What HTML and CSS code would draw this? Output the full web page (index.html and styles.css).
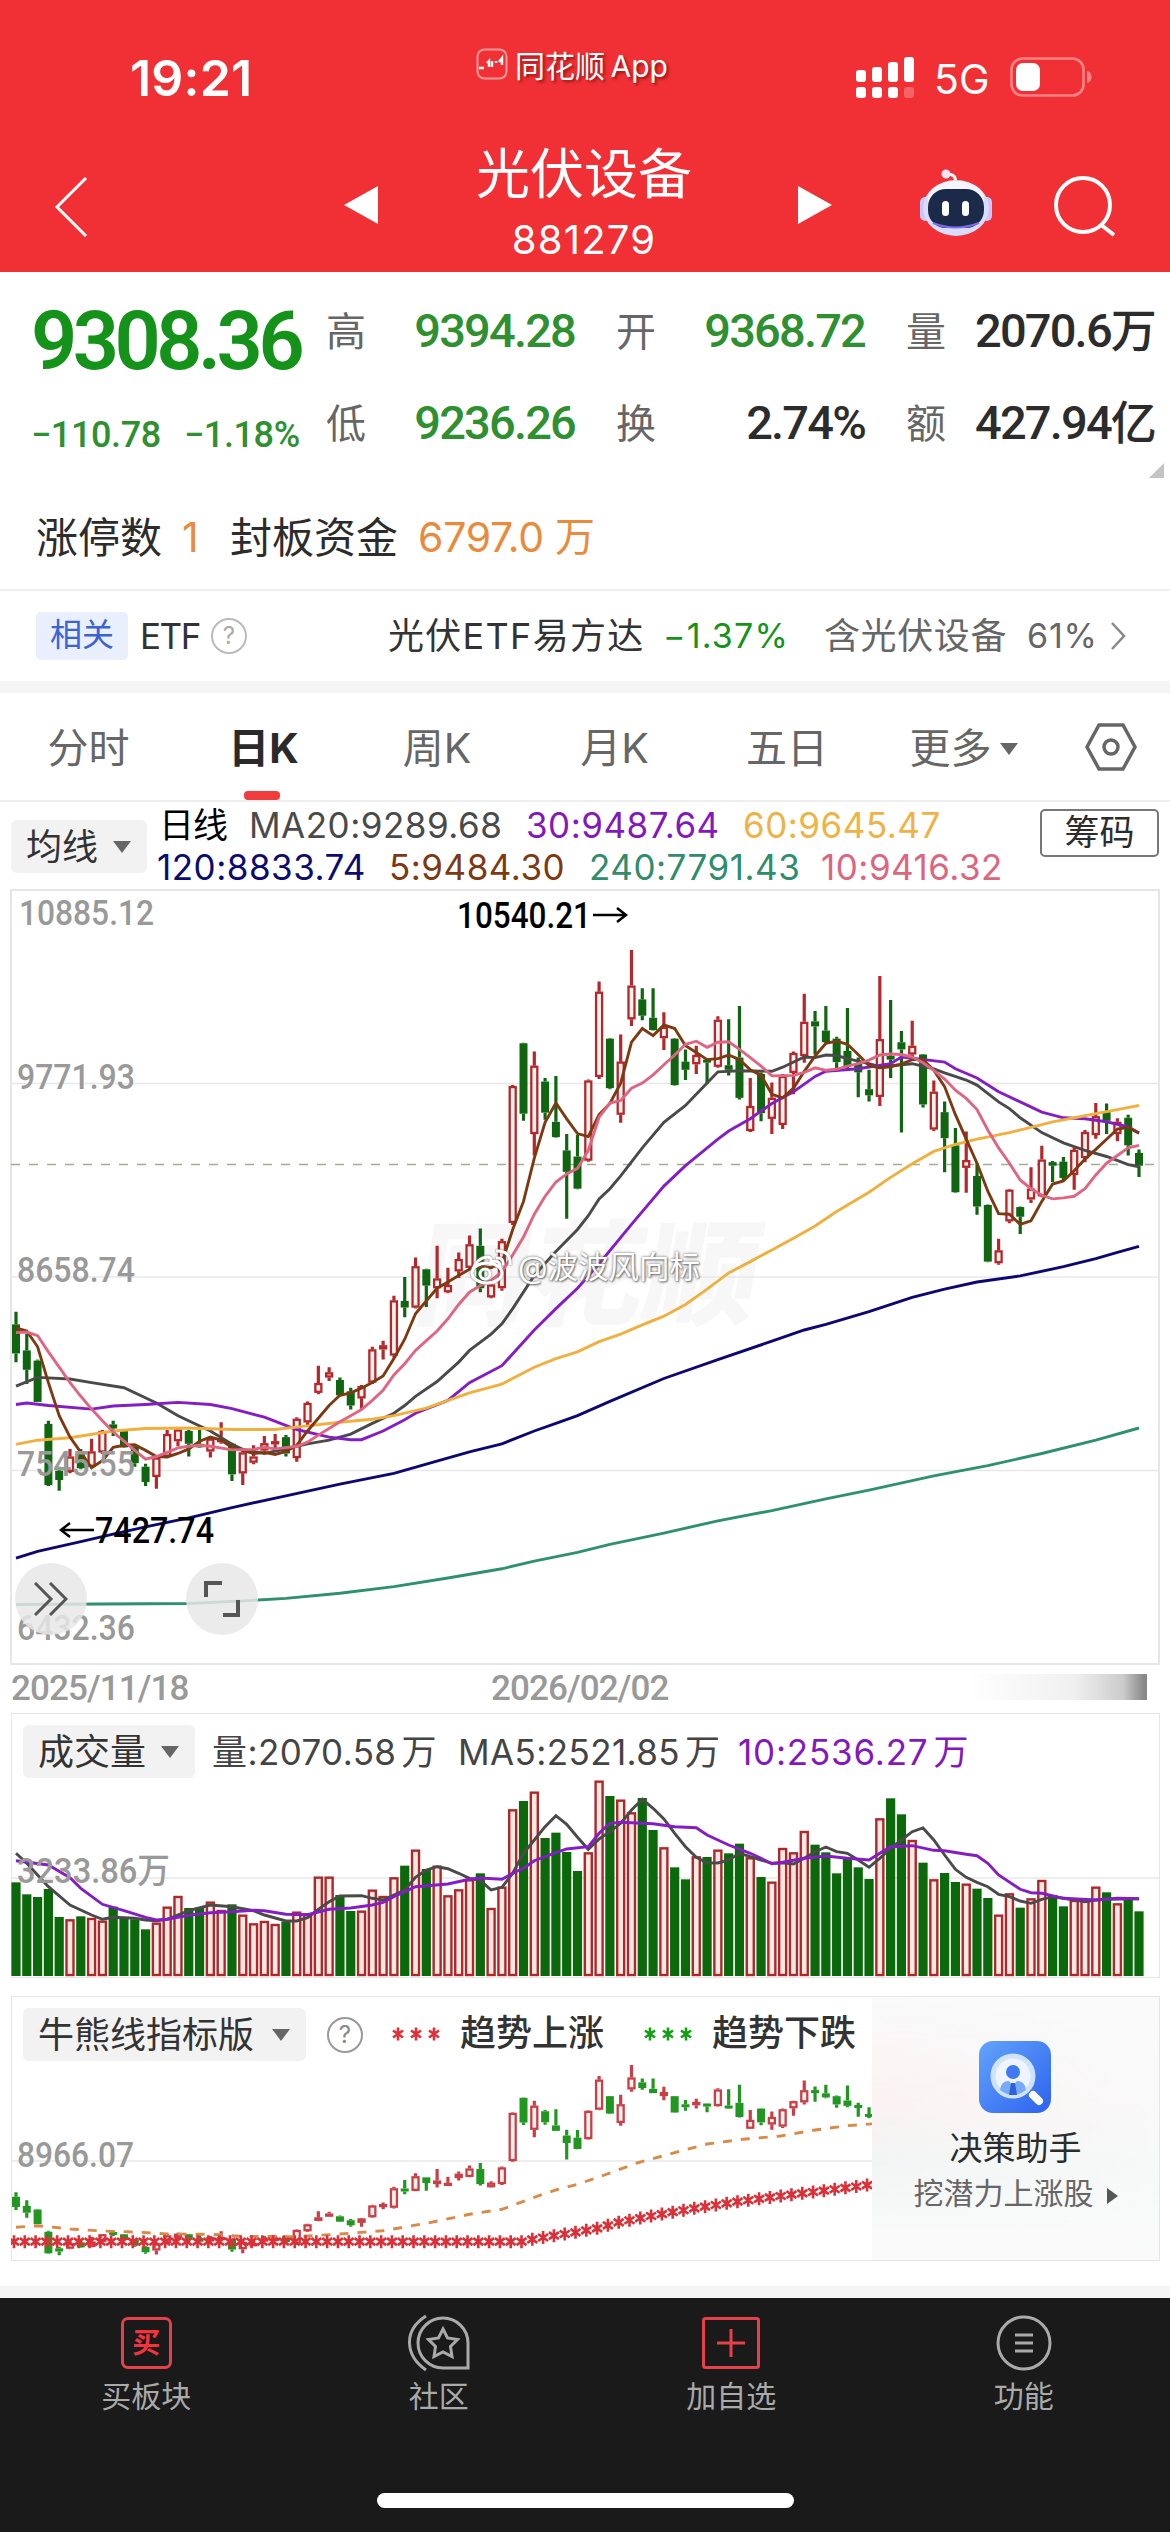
FILE: index.html
```html
<!DOCTYPE html>
<html lang="zh-CN">
<head>
  <meta charset="UTF-8">
  <meta name="viewport" content="width=device-width, initial-scale=1.0">
  <title>光伏设备 881279</title>
  <link rel="stylesheet" href="styles.css">
</head>
<body>
  <header>
    <div class="status">
      <span class="clock">19:21</span>
      <div class="brand">
        <svg width="32" height="32" viewBox="0 0 32 32" fill="none" stroke="#fff">
          <rect x="1.5" y="1.5" width="29" height="29" rx="7" stroke="#ff9a9a" stroke-width="2"/>
          <path d="M3 20h5M11 15l2-2v6M16 19v-6M20 15v-2M23 14l3-4v7" stroke-width="2.4"/>
        </svg>
        <span>同花顺 App</span>
      </div>
      <div class="phone">
        <svg width="58" height="42" viewBox="0 0 58 42" fill="#fff">
          <rect x="0" y="13" width="10" height="12" rx="3"/>
          <rect x="16" y="10" width="10" height="15" rx="3"/>
          <rect x="32" y="5" width="10" height="20" rx="3"/>
          <rect x="48" y="0" width="10" height="25" rx="3"/>
          <rect x="0" y="30" width="10" height="11" rx="3"/>
          <rect x="16" y="30" width="10" height="11" rx="3"/>
          <rect x="32" y="30" width="10" height="11" rx="3"/>
          <rect x="48" y="30" width="10" height="11" rx="3" opacity=".25"/>
        </svg>
        <span class="net">5G</span>
        <svg width="82" height="40" viewBox="0 0 82 40" fill="none">
          <rect x="1.5" y="1.5" width="72" height="37" rx="11" stroke="#f98486" stroke-width="2.6"/>
          <rect x="6" y="6" width="24" height="28" rx="7" fill="#fff"/>
          <path d="M77 14q4.500 1 4.500 6t-4.500 6z" fill="#f98486"/>
        </svg>
      </div>
    </div>
    <div class="titlebar">
      <svg class="back" width="36" height="62" viewBox="0 0 36 62"><path d="M33 2L4 31l29 29" fill="none" stroke="#fff" stroke-width="3"/></svg>
      <svg class="prev" width="34" height="38" viewBox="0 0 34 38"><path d="M34 0v38L0 19z" fill="#fff"/></svg>
      <div class="title">
        <h1>光伏设备</h1>
        <p>881279</p>
      </div>
      <svg class="next" width="34" height="38" viewBox="0 0 34 38"><path d="M0 0v38l34-19z" fill="#fff"/></svg>
      <svg class="robot" width="74" height="68" viewBox="0 0 74 68">
        <path d="M36 13q2-7-7-8" fill="none" stroke="#fff" stroke-width="3"/>
        <circle cx="27" cy="5" r="4.500" fill="#fbe4f4"/>
        <rect x="1" y="28" width="10" height="24" rx="5" fill="#c9c6fa"/>
        <rect x="63" y="28" width="10" height="24" rx="5" fill="#c9c6fa"/>
        <ellipse cx="37" cy="39" rx="33" ry="28" fill="#d9dcfb"/>
        <ellipse cx="37" cy="30" rx="28" ry="18" fill="#f3f5ff"/>
        <rect x="9" y="20" width="56" height="39" rx="18" fill="#1b2a48"/>
        <path d="M14 54q22 9 46 0" fill="none" stroke="#7d6cf0" stroke-width="2"/>
        <rect x="23" y="32" width="7" height="15" rx="3.500" fill="#fff"/>
        <rect x="43" y="32" width="7" height="15" rx="3.500" fill="#fff"/>
      </svg>
      <svg class="search" width="62" height="62" viewBox="0 0 62 62" fill="none" stroke="#fff" stroke-width="4"><circle cx="29" cy="30" r="27"/><path d="M46 49l14 11"/></svg>
    </div>
  </header>

  <section class="quote">
    <div class="price">
      <strong>9308.36</strong>
      <p><span class="diff">−110.78</span><span class="rate">−1.18%</span></p>
    </div>
    <dl class="stats">
      <dt>高</dt><dd class="green">9394.28</dd>
      <dt>开</dt><dd class="green">9368.72</dd>
      <dt>量</dt><dd>2070.6<i>万</i></dd>
      <dt>低</dt><dd class="green">9236.26</dd>
      <dt>换</dt><dd>2.74%</dd>
      <dt>额</dt><dd>427.94<i>亿</i></dd>
    </dl>
    <span class="corner"></span>
  </section>
  <p class="limit"><span>涨停数</span><b class="one">1</b><span>封板资金</span><b>6797.0</b><em>万</em></p>

  <section class="etf">
    <span class="tag">相关</span>
    <span class="etf-name">ETF</span>
    <span class="help">?</span>
    <span class="fund">光伏ETF易方达</span>
    <span class="fund-rate">−1.37%</span>
    <span class="hold">含光伏设备</span>
    <span class="hold-rate">61%</span>
    <svg width="16" height="30" viewBox="0 0 16 30"><path d="M2 2l12 13L2 28" fill="none" stroke="#888" stroke-width="2.500"/></svg>
  </section>
  <div class="band"></div>

  <nav class="tabs">
    <a>分时</a>
    <a class="active">日K</a>
    <a>周K</a>
    <a>月K</a>
    <a>五日</a>
    <a>更多<i class="caret"></i></a>
    <svg width="52" height="48" viewBox="0 0 52 48" fill="none" stroke="#666" stroke-width="3.500"><path d="M14 2h24l12 22-12 22H14L2 24z"/><circle cx="26" cy="24" r="7"/></svg>
  </nav>

  <section class="ma">
    <span class="pill">均线<i class="caret"></i></span>
    <div class="ma-rows">
      <p><span class="ma-name">日线</span><span class="ma20">MA20:9289.68</span><span class="ma30">30:9487.64</span><span class="ma60">60:9645.47</span></p>
      <p><span class="ma120">120:8833.74</span><span class="ma5">5:9484.30</span><span class="ma240">240:7791.43</span><span class="ma10">10:9416.32</span></p>
    </div>
    <span class="chips">筹码</span>
  </section>

  <section class="kline">
    <svg id="kline" width="1170" height="778"></svg>
    <span class="logo-mark">同花顺</span>
    <div class="user-mark">
      <svg width="42" height="38" viewBox="0 0 42 38" fill="none" stroke="#fff" stroke-width="3">
        <ellipse cx="17" cy="25" rx="15" ry="10"/>
        <path d="M3 21Q7 10 17 9q5 0 4 5 9-3 9 5"/>
        <circle cx="15" cy="26" r="5"/>
        <path d="M26 10q8-1 7 7M26 3q15-1 14 14"/>
      </svg>
      <span>@波波风向标</span>
    </div>
    <span class="round expand"><svg width="34" height="34" viewBox="0 0 34 34" fill="none" stroke="#555" stroke-width="3"><path d="M1 1l16 16L1 33M16 1l16 16-16 16"/></svg></span>
    <span class="round full"><svg width="36" height="36" viewBox="0 0 36 36" fill="none" stroke="#555" stroke-width="4"><path d="M2 16V2h16M34 19v15H19"/></svg></span>
  </section>
  <div class="dates"><span>2025/11/18</span><span>2026/02/02</span><i></i></div>

  <section class="panel volume">
    <div class="panel-head">
      <span class="pill">成交量<i class="caret"></i></span>
      <span class="v-now">量:2070.58<i>万</i></span>
      <span class="v-ma5">MA5:2521.85<i>万</i></span>
      <span class="v-ma10">10:2536.27<i>万</i></span>
    </div>
    <svg id="volume" width="1148" height="199" viewBox="11 0 1148 199"></svg>
  </section>

  <section class="panel bull">
    <div class="bull-main">
      <div class="panel-head">
        <span class="pill">牛熊线指标版<i class="caret"></i></span>
        <span class="help">?</span>
        <svg class="stars" width="52" height="18" stroke="#e03038"><use href="#star" x="8" y="9"/><use href="#star" x="26" y="9"/><use href="#star" x="44" y="9"/></svg>
        <span class="trend">趋势上涨</span>
        <svg class="stars second" width="52" height="18" stroke="#14a014"><use href="#star" x="8" y="9"/><use href="#star" x="26" y="9"/><use href="#star" x="44" y="9"/></svg>
        <span class="trend">趋势下跌</span>
      </div>
      <svg id="bull" width="861" height="199" viewBox="11 0 861 199">
        <defs><path id="star" d="M0 -6.500V6.500M-5 -3.500L5 3.500M5 -3.500L-5 3.500" stroke-width="2.600"/></defs>
      </svg>
    </div>
    <aside>
      <svg width="72" height="72" viewBox="0 0 72 72">
        <defs><linearGradient id="blue" x1="0" y1="0" x2="1" y2="1"><stop offset="0" stop-color="#62a4fb"/><stop offset="1" stop-color="#2d62ee"/></linearGradient></defs>
        <rect width="72" height="72" rx="14" fill="url(#blue)"/>
        <circle cx="34" cy="35" r="20" fill="#eef5ff" stroke="#cfe2ff" stroke-width="5"/>
        <circle cx="34" cy="31" r="7" fill="#3f7af2"/>
        <path d="M21 49q1-9 9-9l4 5 4-5q8 0 9 9-13 10-26 0z" fill="#7aa9f7"/>
        <path d="M32 42h4l2 12h-8z" fill="#2d62d8"/>
        <path d="M54 54l6 6" stroke="#fff" stroke-width="8" stroke-linecap="round"/>
      </svg>
      <h2>决策助手</h2>
      <p>挖潜力上涨股<i></i></p>
    </aside>
  </section>

  <div class="band bottom"></div>
  <footer>
    <div class="menu">
      <a><span class="icon buy">买</span>买板块</a>
      <a><span class="icon"><svg width="62" height="58" viewBox="0 0 62 58" fill="none" stroke="#aaa" stroke-width="3"><path d="M18 2Q1 13 1.500 29T18 56"/><path d="M60 54H35a25 25 0 1 1 25-25z"/><path d="M35 15l4.500 9 10 1.500-7 7 1.500 10-9-4.500-9 4.500 1.500-10-7-7 10-1.500z"/></svg></span>社区</a>
      <a><span class="icon"><svg width="58" height="52" viewBox="0 0 58 52" fill="none" stroke="#e5414b" stroke-width="3"><rect x="1.500" y="1.500" width="55" height="49" rx="2"/><path d="M29 12v28M15 26h28"/></svg></span>加自选</a>
      <a><span class="icon"><svg width="56" height="56" viewBox="0 0 56 56" fill="none" stroke="#aaa" stroke-width="3"><circle cx="28" cy="28" r="26"/><path d="M19 20h18M19 28h18M19 36h18"/></svg></span>功能</a>
    </div>
    <div class="home"></div>
  </footer>
  <script src="charts.js"></script>
</body>
</html>
```
FILE: styles.css
```css
* {
  box-sizing: border-box;
}

body {
  margin: 0;
  width: 1170px;
  height: 2532px;
  display: flex;
  flex-direction: column;
  background: #fff;
  color: #2c2c2c;
  font-family: Inter, "Noto Sans CJK SC", sans-serif;
  line-height: 1;
  white-space: nowrap;
  overflow: hidden;
}

p, h1, h2, dl, dd {
  margin: 0;
  font-weight: 400;
}

i, em {
  font-style: normal;
}

svg {
  display: block;
  flex: none;
}

/* header */
header {
  height: 272px;
  flex: none;
  background: #f03035;
  color: #fff;
}

.status {
  height: 140px;
  display: grid;
  grid-template-columns: 476px 380px 1fr;
  padding-top: 48px;
}

.clock {
  padding: 5px 0 0 130px;
  font-size: 50px;
  font-weight: 600;
  letter-spacing: .2px;
}

.brand {
  display: flex;
  gap: 7px;
  font-size: 30px;
  text-shadow: 2px 2px 3px rgba(90, 0, 0, .6);
  word-spacing: -3px;
}

.brand span {
  padding-top: 3px;
}

.phone {
  display: flex;
  align-items: flex-start;
  padding-top: 9px;
}

.net {
  margin: 2px 20px 0 20px;
  font-size: 41px;
  letter-spacing: 0;
}

.titlebar {
  display: flex;
  height: 132px;
}

.back { margin: 36px 0 0 53px; }
.prev { margin: 46px 0 0 255px; }
.next { margin: 46px 0 0 106px; }
.robot { margin: 29px 0 0 87px; }
.search { margin: 35px 0 0 61px; }

.title {
  width: 216px;
  margin-left: 98px;
  text-align: center;
}

.title h1 {
  margin-top: 8px;
  font-size: 54px;
}

.title p {
  margin-top: 18px;
  font-size: 40px;
  letter-spacing: 1.200px;
}

/* quote */
.quote {
  position: relative;
  display: flex;
  height: 214px;
}

.price {
  width: 326px;
  padding: 29px 0 0 31px;
  color: #15921a;
  font-family: Roboto, sans-serif;
}

.price strong {
  display: block;
  font-size: 81px;
  font-weight: 600;
  letter-spacing: -4.500px;
}

.price p {
  display: flex;
  margin-top: 35px;
  font-size: 36px;
  font-weight: 500;
  letter-spacing: -.4px;
  color: #2e9030;
}

.diff {
  width: 153px;
}

.stats {
  display: grid;
  grid-template-columns: 40px 209px 81px 209px 81px 209px;
  grid-template-rows: 92px 92px;
  padding-top: 35px;
}

.stats dt {
  padding-top: 5px;
  font-size: 40px;
  text-align: right;
  color: #666;
}

.stats dd {
  font-family: Roboto, "Noto Sans CJK SC", sans-serif;
  font-size: 47px;
  font-weight: 500;
  letter-spacing: -1.800px;
  text-align: right;
}

.stats .green {
  color: #2e9030;
}

.stats dd i {
  font-size: 46px;
}

.corner {
  position: absolute;
  left: 1149px;
  top: 191px;
  border-left: 15px solid transparent;
  border-bottom: 15px solid #c4c4c4;
}

.limit {
  display: flex;
  height: 105px;
  padding: 31px 0 0 36px;
  font-size: 42px;
  border-bottom: 2px solid #eee;
}

.limit b {
  width: 137px;
  margin-left: 20px;
  font-weight: 400;
  font-size: 41px;
  letter-spacing: -.3px;
  color: #e88b3c;
}

.limit .one {
  width: 48px;
}

.limit em {
  color: #e88b3c;
  font-size: 40px;
}

/* etf row */
.etf {
  display: flex;
  align-items: center;
  height: 90px;
  padding-left: 36px;
  font-size: 36px;
  color: #333;
}

.tag {
  width: 92px;
  padding: 7px 0 9px;
  font-size: 32px;
  text-align: center;
  color: #3c63d2;
  background: #e9effd;
  border-radius: 5px;
}

.etf-name {
  width: 70px;
  padding-left: 12px;
  letter-spacing: -1.500px;
  font-size: 35px;
}

.help {
  width: 36px;
  height: 36px;
  margin-left: 13px;
  border: 2.500px solid #bbb;
  border-radius: 50%;
  font-size: 24px;
  line-height: 31px;
  text-align: center;
  color: #aaa;
}

.fund {
  width: 275px;
  margin-left: 141px;
  letter-spacing: 1.300px;
}

.fund-rate {
  width: 161px;
  color: #15921a;
  font-size: 34px;
  letter-spacing: 1.200px;
}

.hold {
  width: 203px;
  letter-spacing: .6px;
  color: #666;
}

.hold-rate {
  width: 83px;
  color: #666;
  font-size: 34px;
  letter-spacing: .8px;
}

.band {
  height: 12px;
  flex: none;
  background: #f5f5f5;
}

/* period tabs */
.tabs {
  height: 109px;
  display: flex;
  flex: none;
  border-bottom: 2px solid #eee;
  font-size: 41px;
  color: #666;
}

.tabs a {
  width: 177px;
  padding-top: 35px;
  text-align: center;
}

.tabs a:nth-child(3) { width: 166px; }
.tabs a:nth-child(4) { width: 189px; }
.tabs a:nth-child(5) { width: 156px; }
.tabs a:nth-child(6) { width: 197px; }
.tabs svg { margin: 30px 0 0 23px; }

.tabs .active {
  position: relative;
  left: -2px;
  font-weight: 700;
  color: #2a2a2a;
}

.tabs .active::after {
  content: "";
  position: absolute;
  left: 69px;
  bottom: 0;
  width: 36px;
  height: 9px;
  border-radius: 4px;
  background: #f03c3c;
}

.caret {
  display: inline-block;
  border: 9px solid transparent;
  border-top: 12px solid #666;
  border-bottom: 0;
}

.tabs .caret {
  margin-left: 8px;
  vertical-align: 8px;
}

/* moving averages */
.ma {
  display: flex;
  height: 86px;
  flex: none;
}

.pill {
  display: flex;
  align-items: center;
  justify-content: space-between;
  height: 53px;
  padding: 0 16px 0 15px;
  background: #f2f2f2;
  border-radius: 6px;
  font-size: 36px;
  color: #333;
}

.ma .pill {
  width: 136px;
  margin: 18px 0 0 11px;
}

.ma-rows {
  width: 893px;
  padding: 6px 0 0 10px;
  font-size: 35px;
  letter-spacing: .5px;
}

.ma-rows p {
  display: flex;
  height: 42px;
}

.ma-name {
  color: #000;
  padding-left: 2px;
  width: 92px;
  letter-spacing: -1px;
}

.ma20 { color: #4a4a4a; width: 277px; }
.ma30 { color: #8319bd; width: 217px; }
.ma60 { color: #efb244; }
.ma120 { color: #0c0c70; width: 232px; }
.ma5 { color: #7d3a12; width: 200px; }
.ma240 { color: #2f8d6c; width: 232px; }
.ma10 { color: #dc6680; }

.chips {
  width: 119px;
  height: 48px;
  margin-top: 7px;
  padding-top: 4px;
  border: 2px solid #777;
  border-radius: 5px;
  font-size: 35px;
  text-align: center;
}

/* candles */
.kline {
  position: relative;
  height: 778px;
  flex: none;
}

.kline > svg {
  position: relative;
  z-index: 1;
}

.logo-mark {
  position: absolute;
  left: 418px;
  top: 330px;
  font-size: 114px;
  font-weight: 900;
  color: #f7f7f7;
  transform: skewX(-10deg);
}

.user-mark {
  position: absolute;
  z-index: 2;
  left: 470px;
  top: 360px;
  display: flex;
  gap: 6px;
  font-size: 30.500px;
  line-height: 38px;
  color: #fff;
  text-shadow: 0 0 3px #666, 1px 1px 2px #777;
}

.user-mark svg {
  filter: drop-shadow(0 0 1px #666);
}

.round {
  position: absolute;
  z-index: 2;
  top: 675px;
  width: 72px;
  height: 72px;
  border-radius: 50%;
  display: flex;
  align-items: center;
  justify-content: center;
  background: rgba(232, 232, 232, .85);
}

.expand { left: 15px; }
.full { left: 186px; }

.axis {
  font: 500 35px Roboto, "Noto Sans CJK SC", sans-serif;
  fill: #999;
}

.mark {
  font: 500 36px Roboto, sans-serif;
  fill: #000;
}

.dates {
  display: flex;
  height: 47px;
  padding: 5px 0 0 11px;
  font: 500 35px/1 Roboto, sans-serif;
  color: #999;
}

.dates span {
  width: 480px;
  letter-spacing: -.9px;
}

.dates i {
  width: 178px;
  height: 26px;
  margin-top: 3px;
  margin-left: -2px;
  border-right: 3px solid #888;
  background: linear-gradient(to right, #fff, #f0f0f0 60%, #ccc 88%, #888);
}

/* lower charts */
.panel {
  width: 1149px;
  height: 265px;
  margin-left: 11px;
  border: 1.500px solid #e6e6e6;
  flex: none;
}

.panel svg {
  margin-left: -1px;
}

.panel-head {
  display: flex;
  height: 64px;
  padding: 11px 0 0 11px;
}

.volume .pill { width: 172px; }

.v-now, .v-ma5, .v-ma10 {
  padding-top: 10px;
  font-size: 35px;
  letter-spacing: .4px;
  color: #444;
}

.volume .panel-head i:not(.caret) {
  margin-left: 5px;
}

.v-now { width: 246px; margin-left: 17px; }
.v-ma5 { width: 280px; }
.v-ma10 { color: #8319bd; letter-spacing: .8px; }

.bull {
  display: flex;
  margin-top: 18px;
}

.bull-main {
  width: 860px;
}

.bull .pill { width: 283px; }
.bull .help { margin: 9px 0 0 21px; color: #888; border-color: #999; }
.bull .panel-head svg { margin: 17px 0 0 27px; }
.bull .panel-head .second { margin-left: 37px; }

.trend {
  width: 145px;
  margin-left: 18px;
  padding-top: 7px;
  font-size: 36px;
  font-weight: 500;
  color: #333;
}

aside {
  flex: 1;
  display: flex;
  flex-direction: column;
  align-items: center;
  padding-top: 44px;
  background: linear-gradient(to bottom left, rgba(249, 250, 250, .9) 20%, transparent), linear-gradient(#f9f9f9, #fdeeee 38%, #f0f4f3 62%, #fafafa 90%);
}

aside h2 {
  margin-top: 19px;
  font-size: 33px;
}

aside p {
  margin-top: 13px;
  font-size: 30px;
  color: #666;
}

aside p i {
  display: inline-block;
  margin-left: 13px;
  border: 8px solid transparent;
  border-left: 11px solid #555;
  border-right: 0;
}

.bottom {
  margin-top: 25px;
}

/* bottom bar */
footer {
  flex: 1;
  background: #1a1a1a;
  color: #aaa;
}

.menu {
  display: grid;
  grid-template-columns: repeat(4, 1fr);
  height: 195px;
  padding-top: 15px;
}

.menu a {
  display: flex;
  flex-direction: column;
  align-items: center;
  font-size: 30px;
}

.icon {
  height: 60px;
  margin-bottom: 8px;
  display: flex;
  align-items: center;
}

.buy {
  width: 51px;
  height: 52px;
  margin: 4px 0 12px;
  justify-content: center;
  border: 3px solid #e5414b;
  border-radius: 7px;
  font-weight: 700;
  font-size: 28px;
  color: #f5333f;
}

.home {
  width: 417px;
  height: 15px;
  margin: 0 auto;
  border-radius: 8px;
  background: #fff;
}
```
FILE: charts.js
```js
// each candle: high, body top, body bottom, low, 1 = up / 0 = down
const candles = [
  [846,871,928,945,0],[890,922,960,988,0],[940,942,1023,1023,0],[1060,1066,1186,1188,0],[1150,1158,1176,1197,0],
  [1115,1130,1160,1163,1],[1115,1125,1153,1155,0],[1095,1120,1150,1152,1],[1078,1080,1122,1125,1],[1060,1067,1075,1090,0],
  [1078,1080,1112,1113,0],[1108,1110,1143,1150,0],[1144,1150,1180,1188,0],[1130,1132,1170,1193,1],[1078,1086,1130,1132,1],
  [1072,1077,1100,1110,1],[1078,1080,1105,1130,0],[1078,1105,1112,1113,0],[1090,1095,1120,1132,1],[1063,1096,1100,1105,1],
  [1103,1105,1165,1178,0],[1118,1122,1163,1186,1],[1108,1130,1142,1145,1],[1090,1104,1118,1120,1],[1086,1100,1106,1115,1],
  [1088,1092,1124,1130,0],[1053,1056,1133,1140,1],[1022,1025,1063,1068,1],[952,986,1005,1008,1],[955,965,975,982,1],
  [975,980,1010,1012,0],[995,1002,1030,1038,0],[990,992,1016,1038,1],[915,920,985,988,1],[903,912,920,940,1],
  [815,824,932,936,1],[778,825,838,857,0],[740,757,838,840,1],[762,763,795,837,0],[717,781,800,820,1],
  [760,794,808,810,1],[730,743,767,780,1],[697,714,760,763,1],[683,717,800,808,0],[785,793,818,820,1],
  [703,708,800,805,1],[402,404,672,676,1],[319,320,458,472,0],[336,364,498,540,1],[388,395,456,470,0],
  [384,474,504,505,0],[498,530,572,664,0],[500,542,605,606,0],[391,393,550,552,1],[199,219,386,390,1],
  [310,311,408,410,0],[303,356,460,476,1],[137,207,273,286,1],[212,234,266,275,0],[212,270,294,295,0],
  [259,288,310,333,1],[310,311,402,403,0],[332,356,372,392,0],[325,343,361,380,1],[350,352,356,400,0],
  [267,274,366,368,1],[273,363,372,383,0],[247,348,427,430,0],[388,443,492,494,1],[378,380,457,473,0],
  [397,427,468,498,1],[380,384,480,488,1],[336,339,378,420,1],[223,278,345,358,1],[257,277,287,342,0],
  [247,295,318,322,0],[307,311,357,375,0],[251,335,365,372,0],[348,360,377,426,0],[372,410,422,434,0],
  [188,312,425,443,1],[235,345,352,388,0],[296,318,332,495,0],[276,325,342,352,1],[341,342,440,446,0],
  [393,415,489,492,1],[434,455,506,573,0],[486,520,612,613,0],[493,549,564,613,1],[555,580,640,656,0],
  [636,637,748,749,0],[703,726,751,754,1],[606,607,669,673,1],[640,641,660,694,0],[563,605,626,633,1],
  [521,548,620,622,1],[551,553,560,592,0],[543,552,584,590,0],[524,529,578,607,1],[490,494,545,553,1],
  [437,463,500,507,1],[438,455,472,498,0],[467,474,498,512,1],[460,466,520,540,0],[528,535,560,582,0]
];

const volumes = [
  727,763,771,747,831,838,829,834,842,800,833,838,868,848,800,768,804,802,785,810,793,824,850,843,852,845,815,820,
  710,710,765,813,812,749,768,712,677,629,687,677,766,748,718,700,804,740,508,483,455,594,578,636,693,637,422,468,
  479,517,474,570,622,682,718,649,651,629,640,611,652,711,725,624,637,573,614,637,700,655,682,717,535,475,523,600,
  668,718,699,726,731,746,774,824,760,803,775,720,765,799,780,780,740,757,790,775,814
];

// lines are "index:value" pairs, the gaps are joined straight
const averages = [
  ['#4a4a4a', '0:992 2:975 5:978 7:985 10:995 13:1025 15:1050 18:1080 20:1106 21:1116 23:1124 25:1115 27:1105 29:1098 31:1086 33:1065 35:1045 36:1030 37:1012 39:983 41:945 42:922 44:890 45:870 46:840 48:775 50:728 52:685 53:658 54:625 55:605 56:580 58:525 60:475 62:442 64:398 65:376 67:374 70:375 71:367 73:347 74:348 75:343 76:344 77:350 79:360 80:366 83:360 85:370 86:378 88:392 89:402 91:435 92:448 93:466 95:495 97:515 99:530 101:542 103:558 104:562'],
  ['#851dc4', '0:1028 1:1025 3:1030 7:1037 9:1031 12:1028 15:1024 18:1028 20:1036 23:1053 26:1077 29:1092 31:1097 32:1097 34:1080 36:1058 37:1045 40:1020 42:985 45:952 48:882 50:840 52:800 54:752 57:675 60:600 62:560 65:508 66:492 68:468 70:438 72:415 73:400 74:385 75:375 78:370 81:360 82:347 83:349 86:357 87:370 89:388 91:415 93:435 95:455 97:466 99:468 101:474 103:484 104:496'],
  ['#efb040', '0:1106 2:1098 5:1093 9:1080 12:1075 16:1074 20:1077 24:1077 27:1070 30:1063 33:1057 35:1050 38:1035 42:1005 45:988 48:955 50:938 52:925 54:905 56:890 58:872 60:855 62:832 64:802 66:770 68:748 70:725 72:702 74:678 76:650 79:612 81:583 83:556 85:532 87:518 89:508 92:495 94:485 96:474 98:466 100:458 102:450 104:442'],
  ['#0d0870', '0:1329 2:1316 6:1297 9:1282 12:1268 16:1250 20:1230 25:1207 30:1184 35:1163 38:1145 42:1121 45:1105 48:1080 50:1065 52:1050 55:1022 60:977 65:940 70:904 73:882 75:871 79:846 83:818 86:802 89:788 93:776 97:758 100:742 102:730 104:718'],
  ['#2f9070', '0:1420 16:1418 21:1413 25:1408 30:1398 35:1385 40:1368 45:1350 48:1335 52:1318 55:1302 60:1280 65:1256 70:1236 75:1213 79:1196 85:1168 90:1148 95:1124 100:1098 104:1074'],
  ['#7d3a12', '0:878 1:884 2:915 3:985 4:1050 5:1092 6:1122 7:1152 8:1138 9:1112 10:1108 11:1107 12:1118 13:1130 14:1131 15:1124 16:1115 17:1100 18:1092 19:1098 20:1112 21:1118 22:1124 23:1122 24:1126 25:1120 26:1108 27:1080 28:1055 29:1030 30:1010 31:1005 32:996 33:985 34:972 35:938 36:900 37:850 38:825 39:800 40:788 41:775 42:763 43:757 44:760 45:750 46:685 47:630 48:545 49:475 50:437 51:468 52:497 53:503 54:460 55:438 56:398 57:318 58:291 59:305 60:284 61:291 62:325 63:338 64:352 65:350 66:343 67:352 68:372 69:383 70:420 71:427 72:408 73:375 74:345 75:320 76:316 77:322 78:342 79:364 80:368 81:366 82:361 83:352 84:352 85:373 86:405 87:460 88:508 89:555 90:610 91:654 92:655 93:675 94:668 95:630 96:596 97:590 98:570 99:547 100:528 101:508 102:488 103:485 104:496'],
  ['#df6582', '0:887 1:886 2:893 3:925 4:955 5:985 6:1012 7:1037 8:1060 9:1082 10:1100 11:1118 12:1135 13:1130 14:1122 15:1113 16:1110 17:1108 18:1110 20:1117 22:1116 23:1112 24:1115 26:1110 27:1102 28:1088 29:1075 30:1062 31:1050 32:1038 33:1020 34:1000 35:970 36:948 37:922 38:903 39:884 40:860 41:832 42:808 43:795 44:785 45:768 46:735 47:700 48:655 49:620 50:592 51:576 52:565 53:530 54:465 55:437 56:432 57:408 58:398 59:382 60:362 61:343 62:322 63:316 64:328 65:318 66:317 67:332 68:348 69:365 70:384 72:383 73:377 74:368 75:373 76:371 77:365 78:360 79:353 80:343 81:341 82:342 83:347 84:358 85:373 86:390 87:412 88:428 89:450 90:490 91:525 92:555 93:588 94:605 95:618 96:625 97:623 98:620 99:605 100:578 101:555 102:540 103:525 104:520']
];

const volumeAverages = [
  ['#4a4a4a', '0:640 1:670 3:740 5:795 7:825 8:838 9:832 11:835 12:840 13:842 14:838 16:812 18:795 20:800 22:812 23:825 25:843 26:843 27:833 28:808 29:785 30:768 32:767 33:775 34:780 35:765 36:750 37:712 38:690 39:680 40:686 41:700 42:715 43:722 44:750 45:742 46:700 47:640 48:600 49:560 50:527 51:553 52:592 53:628 54:597 55:575 56:550 57:510 58:478 59:505 60:537 61:580 62:620 63:652 64:668 65:669 66:660 67:640 68:650 69:660 70:670 71:668 72:672 73:655 74:635 75:621 76:635 77:640 78:660 79:682 80:655 81:625 82:600 83:575 84:564 85:600 86:645 87:688 88:712 89:727 90:740 91:763 92:770 93:783 94:790 95:778 96:770 97:775 98:780 99:785 100:780 101:778 104:776'],
  ['#851dc4', '0:662 3:675 5:713 6:745 8:793 10:812 12:832 13:840 14:838 16:826 18:818 20:815 22:811 23:812 25:823 27:824 29:808 31:804 33:795 34:787 35:770 36:755 37:740 40:732 42:718 43:714 45:718 46:700 47:685 48:662 50:638 51:627 53:620 54:580 55:550 56:547 59:551 61:560 63:563 64:585 66:615 68:640 69:655 70:671 71:667 73:655 75:648 77:655 79:660 80:640 81:620 83:617 85:631 86:632 88:643 89:647 90:670 91:705 93:748 94:758 95:760 97:775 100:780 102:775 104:776']
];

const bullLine = '0:742 2:737 5:747 8:753 11:756 14:762 18:763 21:769 26:770 30:762 34:752 38:730 42:703 45:688 48:652 50:630 52:613 54.5:585 57.5:549 61:518 64:492 67.3:478 70.8:468 74:450 77:437 80:430';
const starLine = '0:785 47:785 48:778 50:767 52:757 54:745 56:727 59:708 63:685 67:665 71:648 75:632 80:611';

const x = i => 16 + i * 10.798;
const parse = s => s.split(' ').map(p => p.split(':').map(Number));
const line = (s, y, color, extra = '') =>
  `<polyline points="${parse(s).map(([i, v]) => x(i).toFixed(1) + ',' + y(v).toFixed(1)).join(' ')}" fill="none" stroke="${color}" stroke-width="2.900" ${extra}/>`;
const rule = (y, right) => `<path d="M11 ${y}H${right}" stroke="#e8e8e8" stroke-width="1.500"/>`;
const label = (text, left, y, width, cls = 'axis') =>
  `<text class="${cls}" x="${left}" y="${y}" textLength="${width}" lengthAdjust="spacingAndGlyphs">${text}</text>`;

function drawCandles(list, y, red, green) {
  return list.map(([h, t, b, l, up], i) => {
    const c = x(i), top = y(t), bottom = Math.max(y(b), top + 3), color = up ? red : green;
    const wicks = `<path d="M${c} ${y(h)}V${top}M${c} ${bottom}V${Math.max(y(l), bottom)}" stroke="${color}" stroke-width="3.200"/>`;
    return wicks + (up
      ? `<rect x="${c - 3}" y="${top + 1}" width="6" height="${Math.max(bottom - top - 2, 1)}" fill="#fff3f0" stroke="${color}" stroke-width="2.300"/>`
      : `<rect x="${c - 4}" y="${top}" width="8" height="${bottom - top}" fill="${color}"/>`);
  }).join('');
}

// daily candles
const ky = v => v / 1.96 - 8;
document.getElementById('kline').innerHTML =
  '<rect x="11" y="2" width="1148" height="774" fill="none" stroke="#e6e6e6" stroke-width="2"/>' +
  [195.5, 389, 582.5].map(y => rule(y, 1159)).join('') +
  '<path d="M11 276.500H1159" stroke="#a3ad90" stroke-width="1.500" stroke-dasharray="9 9"/>' +
  drawCandles(candles, ky, '#b4272a', '#106610') +
  averages.map(([color, s]) => line(s, ky, color)).join('') +
  label('10885.12', 19, 37, 135) + label('9771.93', 17, 201, 118) + label('8658.74', 17, 394, 118) +
  label('7545.55', 17, 588, 118) + label('6432.36', 17, 752, 118) +
  label('10540.21', 457, 40, 134, 'mark') + label('7427.74', 95, 655, 119, 'mark') +
  '<path d="M593 27h33M617 20l9 7-9 7M94 642H61M70 635l-9 7 9 7" fill="none" stroke="#000" stroke-width="2.500"/>';

// volume
const vy = v => v / 3 - 138;
document.getElementById('volume').innerHTML =
  rule(100, 1159) +
  volumes.map((v, i) => candles[i][4]
    ? `<rect x="${x(i) - 3.5}" y="${vy(v) + 1}" width="7" height="${196 - vy(v)}" fill="#ffe9e2" stroke="#ad282b" stroke-width="2.400"/>`
    : `<rect x="${x(i) - 4.6}" y="${vy(v)}" width="9.200" height="${198 - vy(v)}" fill="#0b680b"/>`).join('') +
  volumeAverages.map(([color, s]) => line(s, vy, color)).join('') +
  label('3233.86万', 17, 105, 153);

// bull / bear indicator
const by = v => v / 3 - 81;
const points = parse(starLine);
let stars = '';
for (let i = 0; i <= 80; i++) {
  const n = points.findIndex(p => p[0] >= i) || 1;
  const [a, b] = [points[n - 1], points[n]];
  const v = a[1] + (b[1] - a[1]) * (i - a[0]) / (b[0] - a[0]);
  stars += `<use href="#star" x="${x(i) - 2}" y="${by(v)}" stroke="#dc3038"/>`;
}
document.getElementById('bull').innerHTML +=
  rule(100, 872) +
  drawCandles(candles.slice(0, 80), v => by(181 + v * 0.5387), '#c93f48', '#219721') +
  line(bullLine, by, '#d98a48', 'stroke-dasharray="9 9"') +
  stars + label('8966.07', 17, 106, 117);
```
